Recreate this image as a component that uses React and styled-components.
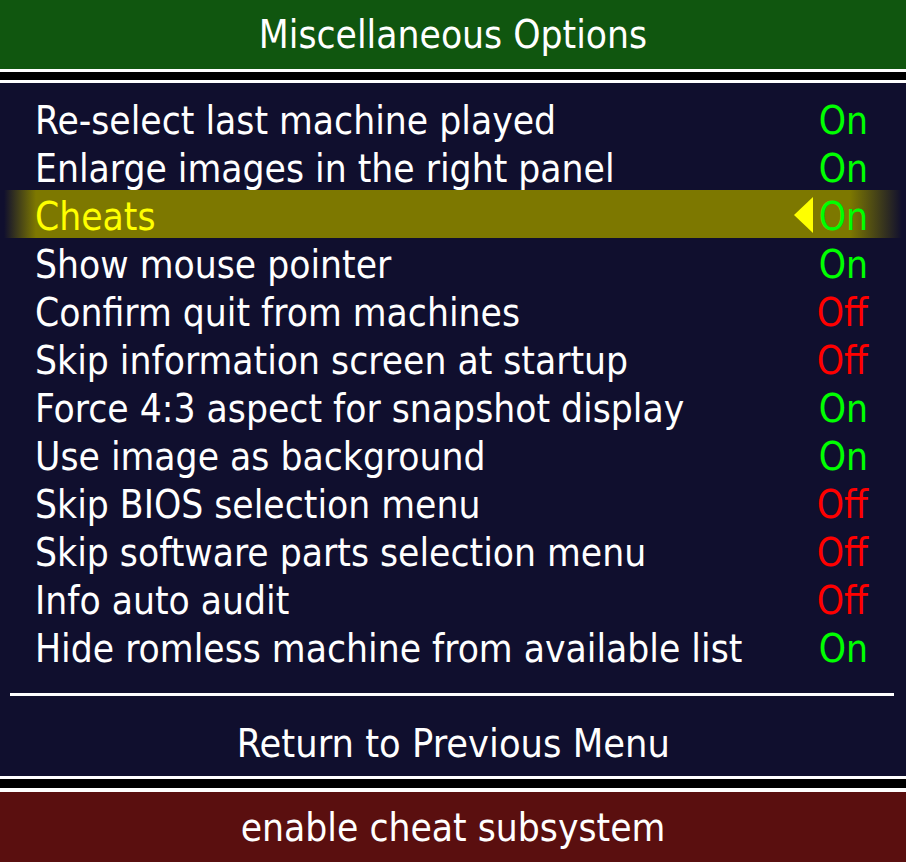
import React from 'react';
import styled, { createGlobalStyle } from 'styled-components';

const GlobalStyle = createGlobalStyle`
  html, body {
    margin: 0;
    padding: 0;
    background: #100f2e;
  }
  body {
    font-family: "DejaVu Sans Condensed", "DejaVu Sans", sans-serif;
  }
`;

const options = [
  { label: 'Re-select last machine played', on: true },
  { label: 'Enlarge images in the right panel', on: true },
  { label: 'Cheats', on: true, selected: true },
  { label: 'Show mouse pointer', on: true },
  { label: 'Confirm quit from machines', on: false },
  { label: 'Skip information screen at startup', on: false },
  { label: 'Force 4:3 aspect for snapshot display', on: true },
  { label: 'Use image as background', on: true },
  { label: 'Skip BIOS selection menu', on: false },
  { label: 'Skip software parts selection menu', on: false },
  { label: 'Info auto audit', on: false },
  { label: 'Hide romless machine from available list', on: true },
];

export default function App() {
  return (
    <Screen>
      <GlobalStyle />
      <Banner $bg="#10560f" $height={69}>
        <BannerText $scale={1.0}>Miscellaneous Options</BannerText>
      </Banner>
      <Rule $black={8} $bottom={3} />
      <Panel>
        <List>
          {options.map((opt) => (
            <Row key={opt.label} $selected={opt.selected}>
              <Label $selected={opt.selected}>{opt.label}</Label>
              <ValueGroup>
                {opt.selected && <Arrow />}
                <Value $on={opt.on}>{opt.on ? 'On' : 'Off'}</Value>
              </ValueGroup>
            </Row>
          ))}
        </List>
        <Divider />
        <ReturnItem>
          <BannerText $scale={1.02}>Return to Previous Menu</BannerText>
        </ReturnItem>
      </Panel>
      <Rule $black={9} $bottom={4} />
      <Banner $bg="#5a0f0f" $height={70}>
        <BannerText $scale={1.0}>enable cheat subsystem</BannerText>
      </Banner>
    </Screen>
  );
}

const Screen = styled.div`
  width: 906px;
  height: 862px;
  display: flex;
  flex-direction: column;
  background: #100f2e;
  overflow: hidden;
`;

const Banner = styled.div`
  height: ${(p) => p.$height}px;
  background: ${(p) => p.$bg};
  display: flex;
  align-items: center;
  justify-content: center;
  padding-top: 2px;
  box-sizing: border-box;
  flex-shrink: 0;
`;

const BannerText = styled.span`
  color: #fff;
  font-size: 38.6px;
  line-height: 1;
  display: inline-block;
  transform: scaleX(${(p) => p.$scale});
  white-space: nowrap;
`;

const Rule = styled.div`
  height: ${(p) => p.$black}px;
  background: #000;
  border-top: 3px solid #fff;
  border-bottom: ${(p) => p.$bottom}px solid #fff;
  flex-shrink: 0;
`;

const Panel = styled.div`
  flex: 1;
  display: flex;
  flex-direction: column;
  padding-top: 11px;
`;

const List = styled.div`
  display: flex;
  flex-direction: column;
`;

const Row = styled.div`
  height: 48px;
  display: flex;
  align-items: center;
  justify-content: space-between;
  padding: 4px 38px 0 35px;
  box-sizing: border-box;
  background: ${(p) =>
    p.$selected
      ? 'linear-gradient(90deg, #100f2e 4px, #7d7800 36px, #7d7800 calc(100% - 56px), #100f2e calc(100% - 4px))'
      : 'transparent'};
`;

const Label = styled.span`
  color: ${(p) => (p.$selected ? '#ffff00' : '#fff')};
  font-size: 38.6px;
  white-space: nowrap;
`;

const ValueGroup = styled.span`
  display: flex;
  align-items: center;
  gap: 6px;
`;

const Arrow = styled.span`
  width: 0;
  height: 0;
  margin-top: -3px;
  border-top: 18px solid transparent;
  border-bottom: 18px solid transparent;
  border-right: 19px solid #ffff00;
`;

const Value = styled.span`
  color: ${(p) => (p.$on ? '#00ff00' : '#ff0000')};
  font-size: 38.6px;
`;

const Divider = styled.div`
  height: 3px;
  background: #fff;
  margin: 23px 12px 0 10px;
`;

const ReturnItem = styled.div`
  flex: 1;
  display: flex;
  align-items: center;
  justify-content: center;
  padding-top: 16px;
`;
